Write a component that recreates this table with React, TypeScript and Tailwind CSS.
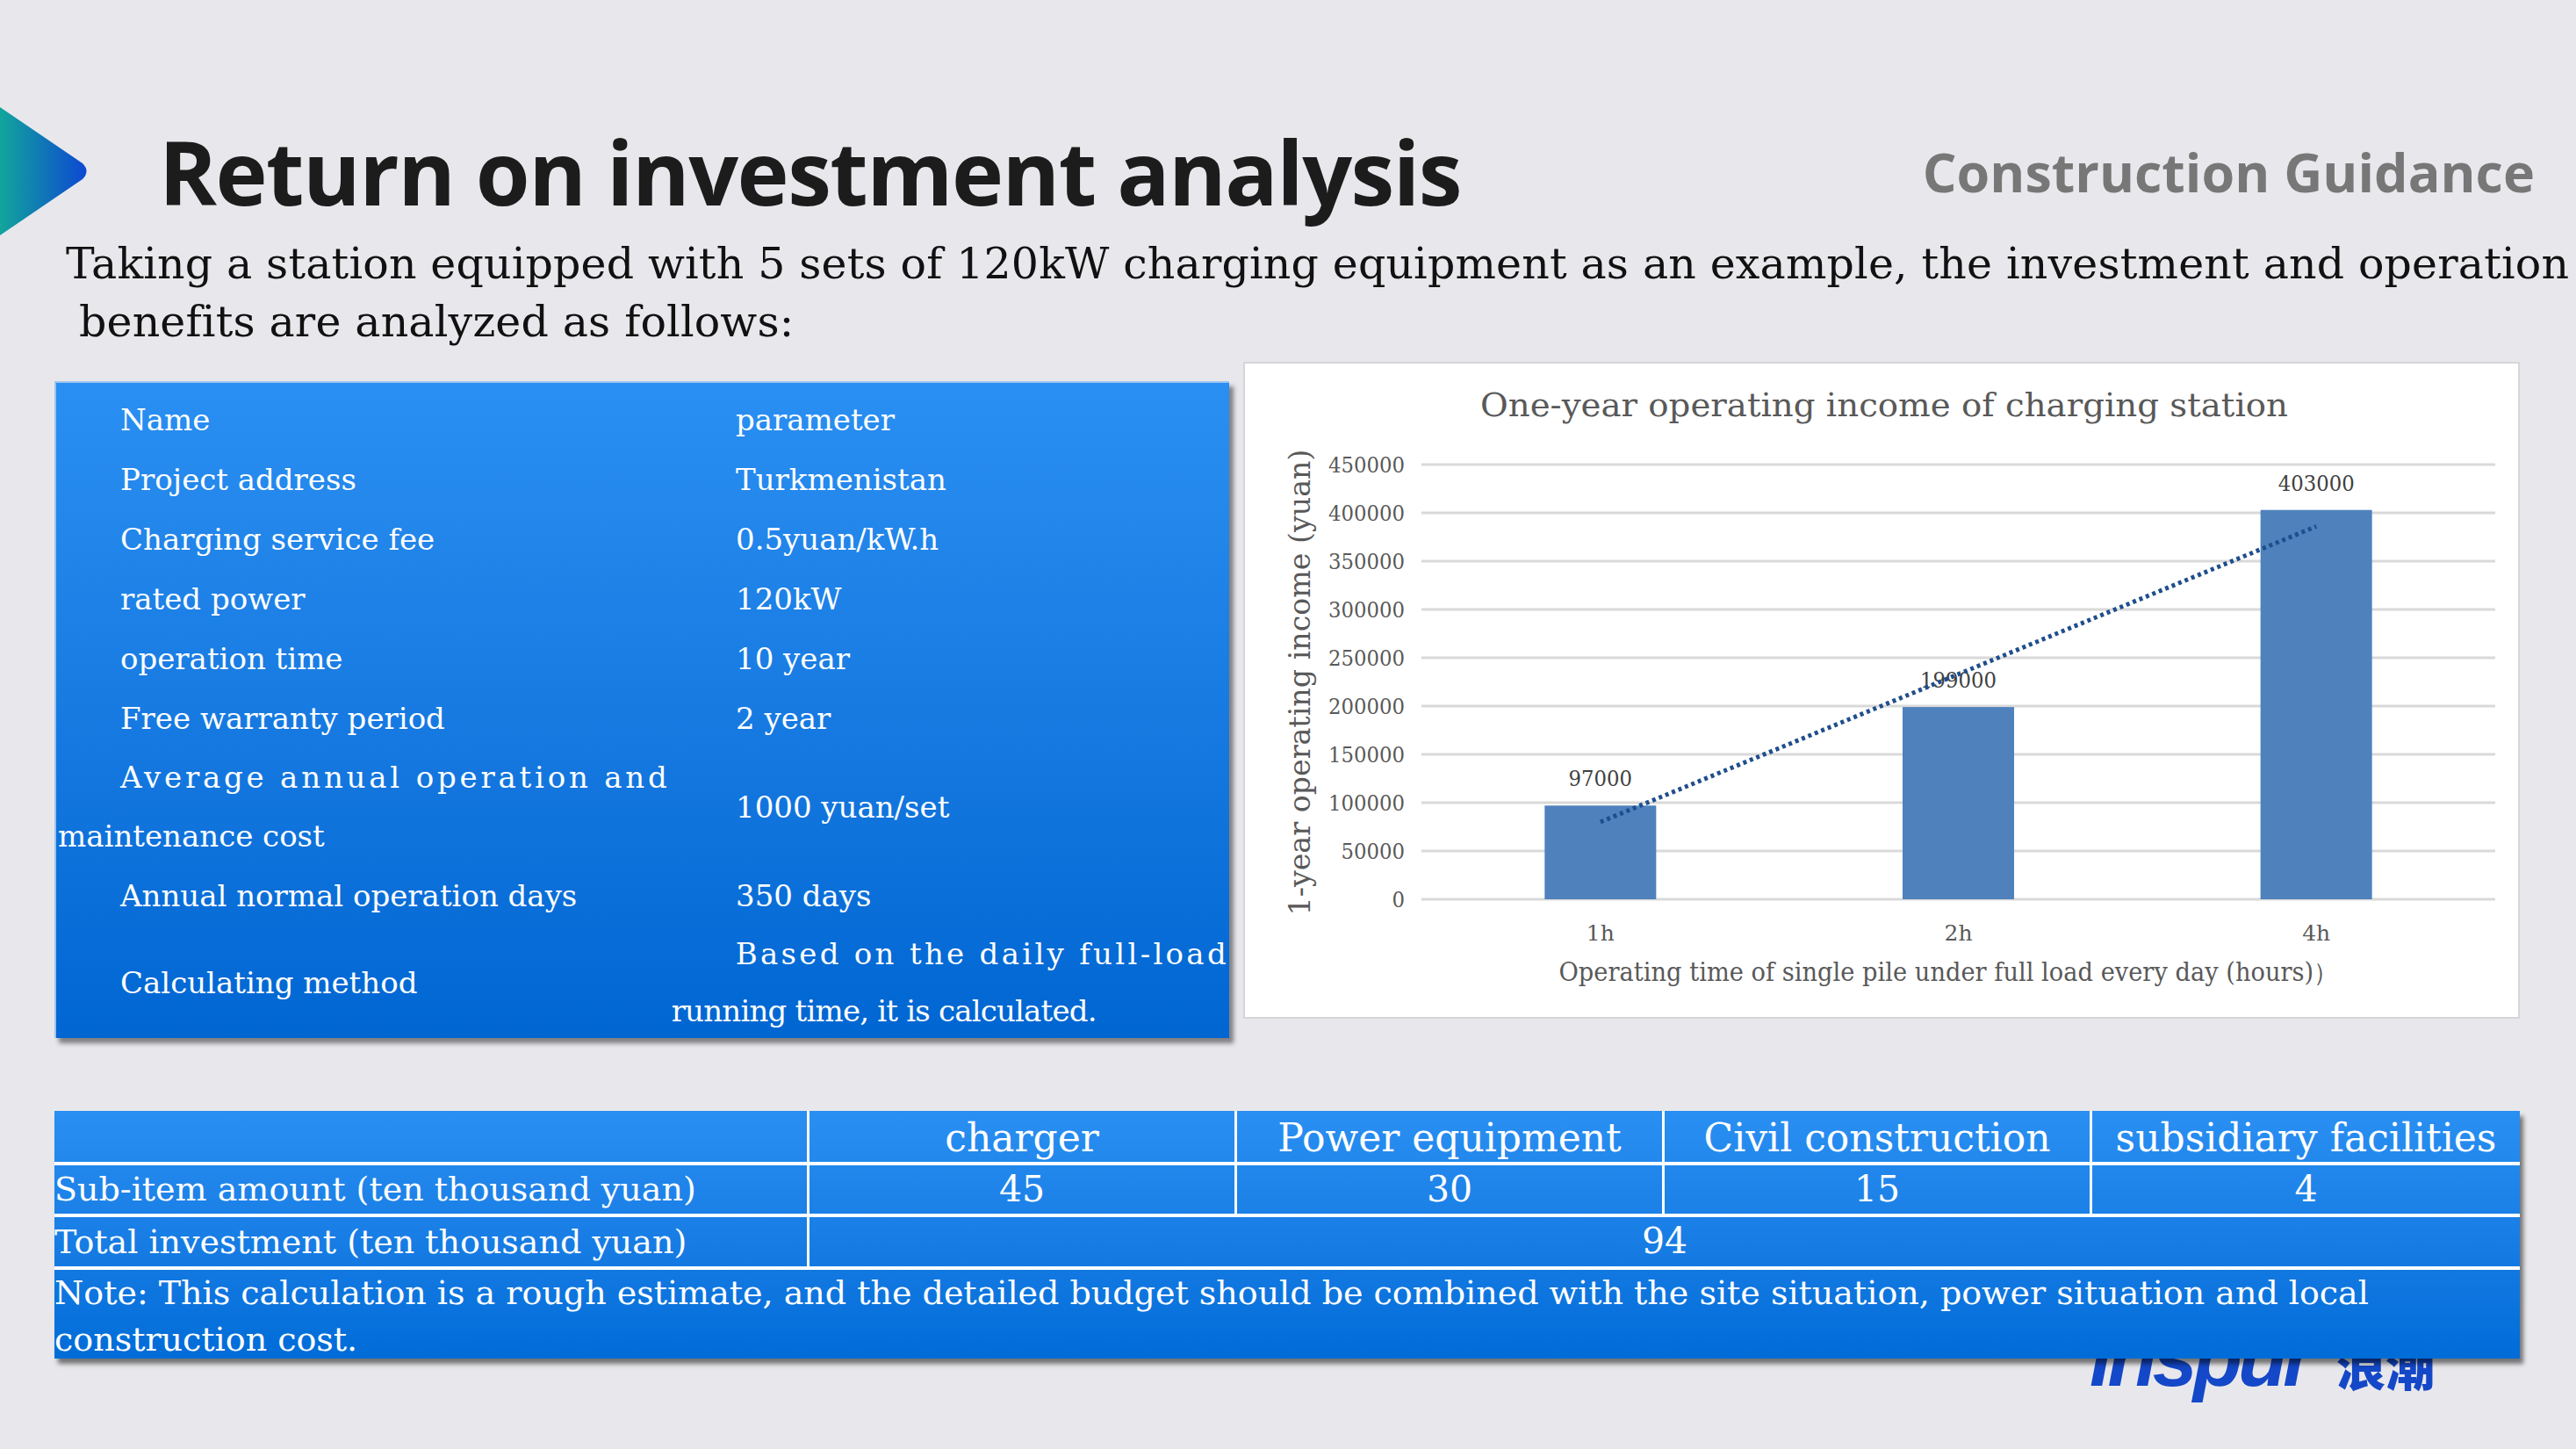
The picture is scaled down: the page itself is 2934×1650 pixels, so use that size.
const specRows: { label: string[]; value: string[]; kind?: "two-label" | "two-value" }[] = [
  { label: ["Name"], value: ["parameter"] },
  { label: ["Project address"], value: ["Turkmenistan"] },
  { label: ["Charging service fee"], value: ["0.5yuan/kW.h"] },
  { label: ["rated power"], value: ["120kW"] },
  { label: ["operation time"], value: ["10 year"] },
  { label: ["Free warranty period"], value: ["2 year"] },
  { label: ["Average annual operation and", "maintenance cost"], value: ["1000 yuan/set"], kind: "two-label" },
  { label: ["Annual normal operation days"], value: ["350 days"] },
  { label: ["Calculating method"], value: ["Based on the daily full-load", "running time, it is calculated."], kind: "two-value" },
];

const bars = [
  { cat: "1h", value: 97000, label: "97000" },
  { cat: "2h", value: 199000, label: "199000" },
  { cat: "4h", value: 403000, label: "403000" },
];

const ticks = [450000, 400000, 350000, 300000, 250000, 200000, 150000, 100000, 50000, 0];

function Arrow() {
  return (
    <svg width="103" height="146" viewBox="0 0 103 146" className="shrink-0">
      <defs>
        <linearGradient id="arrowGrad" x1="0" y1="0" x2="1" y2="0">
          <stop offset="0" stopColor="#12a59c" />
          <stop offset="1" stopColor="#0d48d2" />
        </linearGradient>
      </defs>
      <path d="M0 0 L94 64 Q103 73 94 82 L0 146 Z" fill="url(#arrowGrad)" />
    </svg>
  );
}

function SpecTable() {
  return (
    <div className="mt-[22px] w-[1338px] h-[748px] shrink-0 bg-gradient-to-b from-[#2a8ff2] to-[#0066d2] border-t-2 border-l-2 border-[#9fc3ee] shadow-[5px_6px_5px_rgba(0,0,0,0.45)] pt-[8px] text-white text-[34px] font-['DejaVu_Serif',serif] overflow-hidden">
      {specRows.map((r, i) => {
        if (r.kind === "two-label") {
          return (
            <div key={i} className="flex h-[134px]">
              <div className="w-[699px] pl-[2px] flex flex-col justify-center leading-[67px]">
                <span className="pl-[71px] tracking-[3.8px] whitespace-nowrap">{r.label[0]}</span>
                <span>{r.label[1]}</span>
              </div>
              <div className="flex items-center pl-[75px]">{r.value[0]}</div>
            </div>
          );
        }
        if (r.kind === "two-value") {
          return (
            <div key={i} className="flex h-[130px]">
              <div className="w-[699px] pl-[73px] flex items-center">{r.label[0]}</div>
              <div className="flex flex-col justify-center leading-[65px] whitespace-nowrap">
                <span className="pl-[75px] tracking-[3.3px]">{r.value[0]}</span>
                <span className="pl-[2px] tracking-[-0.8px]">{r.value[1]}</span>
              </div>
            </div>
          );
        }
        return (
          <div key={i} className="flex h-[68px] items-center">
            <div className="w-[699px] pl-[73px]">{r.label[0]}</div>
            <div className="pl-[75px]">{r.value[0]}</div>
          </div>
        );
      })}
    </div>
  );
}

function IncomeChart() {
  const x0 = 201;
  const x1 = 1424;
  const base = 610;
  const k = 495 / 450000;
  const band = (x1 - x0) / 3;
  const cx = (i: number) => x0 + band * i + band / 2;
  return (
    <div className="w-[1454px] h-[748px] shrink-0 ml-[16px] bg-white border-2 border-[#d6d6d8]">
      <svg width="1450" height="744" viewBox="0 0 1450 744" className="font-['DejaVu_Serif',serif]">
        <text x="728" y="60" textAnchor="middle" fontSize="37" fill="#595959" textLength="920" lengthAdjust="spacingAndGlyphs">
          One-year operating income of charging station
        </text>
        {ticks.map((t, i) => {
          const y = 115 + 55 * i;
          const s = String(t);
          return (
            <g key={t}>
              <line x1={x0} x2={x1} y1={y} y2={y} stroke="#d9d9d9" strokeWidth="3" />
              <text x="182" y={y + 9} textAnchor="end" fontSize="25" fill="#595959" textLength={s.length * 14.5} lengthAdjust="spacingAndGlyphs">
                {s}
              </text>
            </g>
          );
        })}
        {bars.map((b, i) => {
          const h = b.value * k;
          return (
            <g key={b.cat}>
              <rect x={cx(i) - 63.5} y={base - h} width="127" height={h} fill="#4f81bd" />
              <text x={cx(i)} y={base - h - 22} textAnchor="middle" fontSize="25" fill="#404040" textLength={b.label.length * 14.5} lengthAdjust="spacingAndGlyphs">
                {b.label}
              </text>
              <text x={cx(i)} y="657" textAnchor="middle" fontSize="25" fill="#595959">
                {b.cat}
              </text>
            </g>
          );
        })}
        <line x1={cx(0)} y1={base - 80000 * k} x2={cx(2)} y2={base - 386000 * k} stroke="#1f4e8c" strokeWidth="5" strokeDasharray="4 4" />
        <text x="801" y="703" textAnchor="middle" fontSize="29" fill="#595959" textLength="887" lengthAdjust="spacingAndGlyphs">
          Operating time of single pile under full load every day (hours)）
        </text>
        <text x="62" y="375" transform="rotate(-90 62 363)" textAnchor="middle" fontSize="33" fill="#595959" textLength="531" lengthAdjust="spacingAndGlyphs">
          1-year operating income (yuan)
        </text>
      </svg>
    </div>
  );
}

function CostTable() {
  const cols = ["charger", "Power equipment", "Civil construction", "subsidiary facilities"];
  const amounts = ["45", "30", "15", "4"];
  const widths = ["w-[487px]", "w-[487px]", "w-[487px]", "flex-1"];
  return (
    <div className="relative z-10 mt-[83px] ml-[62px] w-[2808px] bg-gradient-to-b from-[#2a8ff2] to-[#006cd8] shadow-[4px_6px_5px_rgba(0,0,0,0.5)] text-white font-['DejaVu_Serif',serif]">
      <div className="flex h-[62px] border-b-[4px] border-white text-[44px]">
        <div className="w-[860px] border-r-[3px] border-white" />
        {cols.map((c, i) => (
          <div key={c} className={`${widths[i]} ${i < 3 ? "border-r-[3px] border-white" : ""} flex items-center justify-center whitespace-nowrap pt-[4px]`}>
            {c}
          </div>
        ))}
      </div>
      <div className="flex h-[59px] border-b-[4px] border-white text-[38px]">
        <div className="w-[860px] border-r-[3px] border-white flex items-center whitespace-nowrap">Sub-item amount (ten thousand yuan)</div>
        {amounts.map((a, i) => (
          <div key={i} className={`${widths[i]} ${i < 3 ? "border-r-[3px] border-white" : ""} flex items-center justify-center text-[41px]`}>
            {a}
          </div>
        ))}
      </div>
      <div className="flex h-[60px] border-b-[4px] border-white text-[38px]">
        <div className="w-[860px] border-r-[3px] border-white flex items-center whitespace-nowrap">Total investment (ten thousand yuan)</div>
        <div className="flex-1 flex items-center justify-center text-[41px]">94</div>
      </div>
      <div className="h-[101px] text-[38px] leading-[53px]">
        <div className="whitespace-nowrap">
          Note: This calculation is a rough estimate, and the detailed budget should be combined with the site situation, power situation and local
        </div>
        <div>construction cost.</div>
      </div>
    </div>
  );
}

export default function App() {
  return (
    <div className="relative w-[2934px] h-[1650px] overflow-hidden bg-[#e8e8ec]">
      <div className="mt-[122px] h-[146px] flex items-center">
        <Arrow />
        <h1 className="ml-[78px] font-['Open_Sans',sans-serif] font-bold text-[100px] leading-none text-[#1c1c1c] tracking-[-1.5px]">
          Return on investment analysis
        </h1>
        <div className="ml-auto mr-[47px] font-['Open_Sans',sans-serif] font-bold text-[61px] leading-none text-[#777777]">
          Construction Guidance
        </div>
      </div>
      <div className="pl-[75px] font-['DejaVu_Serif',serif] text-[49px] leading-[66px] tracking-[0.15px] text-[#111111] whitespace-nowrap">
        <div>Taking a station equipped with 5 sets of 120kW charging equipment as an example, the investment and operation</div>
        <div className="pl-[15px]">benefits are analyzed as follows:</div>
      </div>
      <div className="mt-[12px] ml-[62px] flex items-start">
        <SpecTable />
        <IncomeChart />
      </div>
      <CostTable />
      <div className="absolute left-[2380px] top-[1500px] z-0 flex items-baseline gap-[30px] text-[#1448c8]">
        <span className="font-['Liberation_Sans',sans-serif] font-bold italic text-[92px] leading-none tracking-[-5px]">inspur</span>
        <span className="font-['Noto_Sans_CJK_SC',sans-serif] font-black text-[56px] leading-none">浪潮</span>
      </div>
    </div>
  );
}
